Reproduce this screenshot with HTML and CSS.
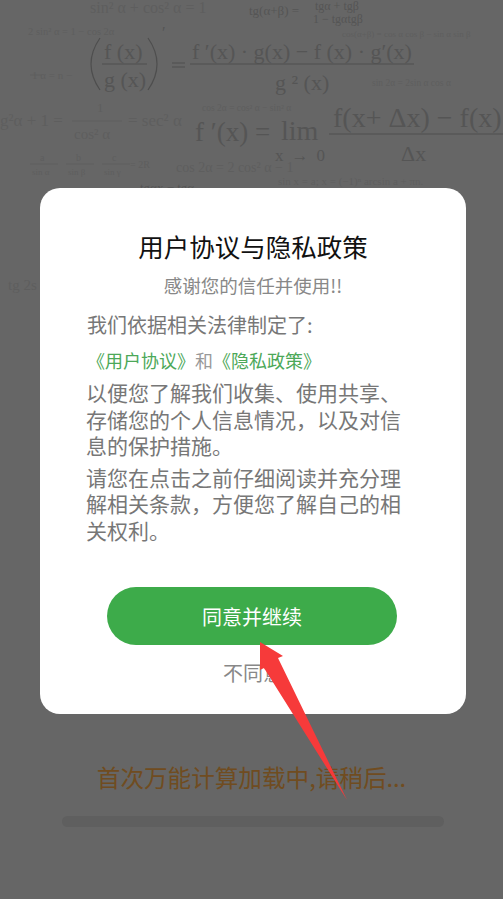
FILE: index.html
```html
<!DOCTYPE html>
<html lang="zh-CN">
<head>
    <meta charset="UTF-8">
    <meta name="viewport" content="width=device-width, initial-scale=1.0">
    <title>用户协议与隐私政策</title>
    <link rel="stylesheet" href="styles.css">
</head>
<body>
    <div class="screen">
        <!-- formula wallpaper behind the dim layer -->
        <svg class="formulas" viewBox="0 0 503 899" width="503" height="899">
            <g class="small">
                <text x="90" y="13" font-size="16">sin² α + cos² α = 1</text>
                <text x="28" y="35" font-size="10.5">2 sin² α = 1 − cos 2α</text>
                <text x="342" y="37" font-size="9">cos(α+β) = cos α cos β − sin α sin β</text>
                <text x="372" y="86" font-size="9.5">sin 2α = 2sin α cos α</text>
                <text x="202" y="111" font-size="9.5">cos 2α = cos² α − sin² α</text>
                <text x="176" y="172" font-size="14">cos 2α = 2 cos² α − 1</text>
                <text x="278" y="185" font-size="11">sin x = a;  x = (−1)ⁿ arcsin a + πn.</text>
                <text x="0" y="126" font-size="17">g²α + 1 =</text>
                <text x="97" y="112" font-size="13">1</text>
                <text x="74" y="139" font-size="15">cos² α</text>
                <text x="128" y="126" font-size="17">= sec² α</text>
                <text x="40" y="161" font-size="10">a</text>
                <text x="32" y="175" font-size="9">sin α</text>
                <text x="76" y="161" font-size="10">b</text>
                <text x="68" y="175" font-size="9">sin β</text>
                <text x="112" y="161" font-size="10">c</text>
                <text x="104" y="175" font-size="9">sin γ</text>
                <text x="130" y="168" font-size="10">= 2R</text>
                <text x="32" y="79" font-size="11">1  α = n −</text>
                <text x="8" y="290" font-size="15">tg 2s</text>
            </g>
            <path class="faint" d="M30 164H58M66 164H94M102 164H130M72 121H122M30 75H42"/>
            <g class="large">
                <text x="249" y="15" font-size="13">tg(α+β) =</text>
                <text x="315" y="10" font-size="12">tgα + tgβ</text>
                <text x="313" y="23" font-size="12">1 − tgαtgβ</text>
                <text x="104" y="59" font-size="22">f (x)</text>
                <text x="104" y="87" font-size="22">g (x)</text>
                <text x="192" y="59" font-size="22">f ′(x) · g(x) − f (x) · g′(x)</text>
                <text x="275" y="90" font-size="22">g ² (x)</text>
                <text x="162" y="38" font-size="16">′</text>
                <text x="195" y="141" font-size="27">f ′(x) =</text>
                <text x="281" y="140" font-size="28">lim</text>
                <text x="275" y="161" font-size="17" textLength="50">x → 0</text>
                <text x="333" y="127" font-size="28">f(x+ Δx) − f(x)</text>
                <text x="401" y="161" font-size="22">Δx</text>
                <text x="140" y="192" font-size="13">tgαx  − tgα</text>
            </g>
            <path class="rule" d="M102 64H147M190 64H414M329 134H503M172 63H185M172 67H185"/>
            <path class="bracket" d="M100 38Q82 64 100 90M148 38Q166 64 148 90"/>
        </svg>

        <div class="dialog">
            <h1 class="dialog-title">用户协议与隐私政策</h1>
            <p class="dialog-sub">感谢您的信任并使用!!</p>
            <p class="intro">我们依据相关法律制定了:</p>
            <p class="links"><span class="link">《用户协议》</span>和<span class="link">《隐私政策》</span></p>
            <p class="copy">以便您了解我们收集、使用共享、存储您的个人信息情况，以及对信息的保护措施。</p>
            <p class="copy second">请您在点击之前仔细阅读并充分理解相关条款，方便您了解自己的相关权利。</p>
            <button class="agree">同意并继续</button>
            <div class="disagree">不同意</div>
        </div>

        <div class="loading">
            <div class="loading-text">首次万能计算加载中,请稍后...</div>
            <div class="loading-bar"></div>
        </div>

        <svg class="arrow" viewBox="0 0 503 899" width="503" height="899">
            <path d="M260 642L283 656L278 658L347 800L264 668L260 670Z"/>
        </svg>
    </div>
</body>
</html>
```

FILE: styles.css
```css
body {
    margin: 0;
    padding: 0;
    background: #666;
    font-family: "Noto Sans CJK SC", "Liberation Sans", sans-serif;
}

.screen {
    position: relative;
    width: 503px;
    height: 899px;
    padding-top: 188px;
    box-sizing: border-box;
    overflow: hidden;
    background: #666;
}

.formulas {
    position: absolute;
    top: 0;
    left: 0;
    font-family: "Liberation Serif", serif;
}

.formulas .small {
    fill: #5e5e5e;
}

.formulas .large {
    fill: #555;
}

.formulas .faint {
    stroke: #5e5e5e;
    stroke-width: 1;
    fill: none;
}

.formulas .rule {
    stroke: #4e4e4e;
    stroke-width: 1;
    fill: none;
}

.formulas .bracket {
    stroke: #4e4e4e;
    stroke-width: 1.2;
    fill: none;
}

.dialog {
    position: relative;
    box-sizing: border-box;
    width: 426px;
    height: 526px;
    margin-left: 40px;
    padding: 42px 47px 0;
    background: #fff;
    border-radius: 20px;
    color: #777;
}

.dialog-title {
    margin: 0;
    font-size: 25.5px;
    font-weight: 400;
    line-height: 32px;
    color: #111;
    text-align: center;
}

.dialog-sub {
    margin: 8px 0 0;
    font-size: 18.5px;
    line-height: 30px;
    color: #888;
    text-align: center;
}

.intro {
    margin: 10px 0 0;
    font-size: 20px;
    line-height: 30px;
}

.links {
    margin: 5px 0 0;
    font-size: 18px;
    line-height: 30px;
    color: #999;
}

.link {
    color: #4ca858;
}

.copy {
    max-width: 325px;
    margin: 4px 0 0 -1px;
    font-size: 21px;
    line-height: 26.5px;
}

.copy.second {
    margin-top: 5px;
}

.agree {
    display: block;
    width: 290px;
    height: 58px;
    margin: 44px 0 0 20px;
    padding: 0;
    border: 0;
    border-radius: 29px;
    background: #3dab4a;
    color: #fff;
    font-family: inherit;
    font-size: 20px;
}

.disagree {
    margin-top: 13px;
    font-size: 20px;
    line-height: 30px;
    color: #888;
    text-align: center;
}

.loading {
    position: relative;
    margin-top: 47px;
}

.loading-text {
    font-size: 23.6px;
    line-height: 32px;
    color: #704c20;
    text-align: center;
}

.loading-bar {
    width: 382px;
    height: 11px;
    margin: 23px 0 0 62px;
    border-radius: 6px;
    background: #5f5f5f;
}

.arrow {
    position: absolute;
    top: 0;
    left: 0;
    fill: #f63a3a;
}
```
